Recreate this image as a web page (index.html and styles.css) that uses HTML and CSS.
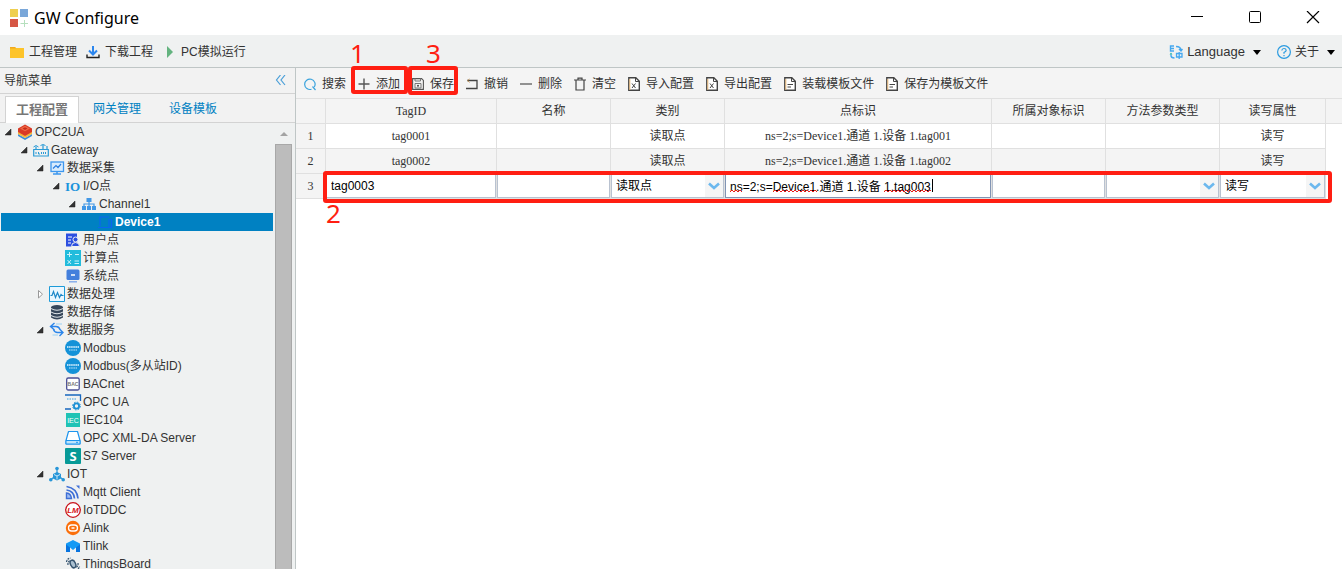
FILE: index.html
```html
<!DOCTYPE html>
<html lang="zh-CN">
<head>
    <meta charset="UTF-8">
    <meta name="viewport" content="width=device-width, initial-scale=1.0">
    <title>GW Configure</title>
    <link rel="stylesheet" href="styles.css">
</head>
<body>

    <!-- shared icons -->
    <svg class="defs" aria-hidden="true">
        <symbol id="chevron" viewBox="0 0 12 8"><path d="M1 1.500 6 6l5-4.500" fill="none" stroke="#6cb8ee" stroke-width="2.600"/></symbol>
        <symbol id="open" viewBox="0 0 16 16"><path d="M10 5v6H4z" fill="#333" stroke="#222" stroke-width=".5"/></symbol>
        <symbol id="closed" viewBox="0 0 16 16"><path d="M5.500 4.500v7.500L9.500 8.200z" fill="#fff" stroke="#999"/></symbol>
        <symbol id="xls" viewBox="0 0 12 14"><path d="M.8.8h7l3.500 3.500v9H.8z" fill="#fff" stroke="#444" stroke-width="1.400"/><path d="M7.500 1v3.500H11" fill="none" stroke="#444"/><path d="M1.800 2v11" stroke="#e8b878"/><path d="m4 6.500 3.500 4.500m0-4.500-3.500 4.500" stroke="#444"/></symbol>
        <symbol id="doc" viewBox="0 0 12 14"><path d="M.8.8h7l3.500 3.500v9H.8z" fill="#fff" stroke="#444" stroke-width="1.400"/><path d="M7.500 1v3.500H11" fill="none" stroke="#444"/><path d="M1.800 2v11" stroke="#e8b878"/><path d="M3.500 7.500h5.500M3.500 10h3.500" stroke="#444"/></symbol>
        <symbol id="modbus" viewBox="0 0 16 16"><circle cx="8" cy="8" r="8" fill="#1492d8"/><path d="M2 7h12" stroke="#b5dff6" stroke-width="1.800" stroke-dasharray="1.500 .6"/><path d="M4 10h8" stroke="#8dccf0" stroke-width="1.400" stroke-dasharray="1.500 .7"/></symbol>
    </svg>

    <header class="titlebar">
        <svg class="logo" width="20" height="20" viewBox="0 0 20 20"><path d="M0 0h8v8H0z" fill="#efcf4f"/><path d="M10 0h8v8h-8z" fill="#7aa7d9"/><path d="M0 10h8v8H0z" fill="#d65745"/><path d="M14.500 11v7m-4-3.500h7.500" stroke="#b5dfbd"/></svg>
        <h1>GW Configure</h1>
        <div class="win-btns">
            <button aria-label="最小化"><svg width="14" height="14" viewBox="0 0 14 14"><path d="M1 5.500h12" stroke="#000"/></svg></button>
            <button aria-label="最大化"><svg width="14" height="14" viewBox="0 0 14 14"><rect x="1.500" y=".5" width="11" height="11" rx="1" fill="none" stroke="#000"/></svg></button>
            <button aria-label="关闭"><svg width="14" height="14" viewBox="0 0 14 14"><path d="m1 0 12 12M13 0 1 12" stroke="#000" stroke-width="1.200"/></svg></button>
        </div>
    </header>

    <nav class="menubar">
        <button><svg width="16" height="16" viewBox="0 0 16 16"><path d="M1 3h5l1 1h8v10H1z" fill="#fdc42a"/><path d="M1 3h5l1 1.500H1z" fill="#f2a91d"/></svg>工程管理</button>
        <button><svg width="16" height="16" viewBox="0 0 16 16"><path d="M8 2v8M4 6.500l4 4 4-4" fill="none" stroke="#2b86ee" stroke-width="2"/><path d="M2 10.500v3h12v-3" fill="none" stroke="#222" stroke-width="1.400"/></svg>下载工程</button>
        <button><svg width="16" height="16" viewBox="0 0 16 16"><path d="M6 2v12l6-6z" fill="#63b37f"/></svg>PC模拟运行</button>
        <button class="lang"><svg width="14" height="16" viewBox="0 0 14 16"><path d="M5 2H1.500v5H5M1.500 4.500H5M7 2.500q5 0 5 4M10 5l2 2 1.500-2M2 9v2.500q0 2.500 3.500 2.500" fill="none" stroke="#45a8ef" stroke-width="1.400"/><path d="M7.500 9.500h5.500v3.500H7.500zM10.200 8v7" fill="none" stroke="#45a8ef" stroke-width="1.300"/><path d="M.5 10.500 2 8.500l1.500 2z" fill="#52cba8"/></svg>Language<i class="caret"></i></button>
        <button><svg width="14" height="16" viewBox="0 0 14 16"><circle cx="7" cy="8" r="6.400" fill="none" stroke="#2b9be0" stroke-width="1.200"/><path d="M4.800 6.500Q5 4.500 7 4.500t2.200 1.800Q9.200 7.500 7 8.500v1.300M7 11v1.300" fill="none" stroke="#2b9be0" stroke-width="1.200"/></svg>关于<i class="caret"></i></button>
    </nav>

    <div class="layout">
        <aside class="sidebar">
            <div class="side-title">
                <h2>导航菜单</h2>
                <button aria-label="折叠"><svg width="12" height="12" viewBox="0 0 12 12"><path d="M5.500 0 1.500 5l4 5M10 0 6 5l4 5" fill="none" stroke="#4a9fd8" stroke-width="1.200"/></svg></button>
            </div>
            <div class="tabs">
                <button class="tab active">工程配置</button>
                <button class="tab">网关管理</button>
                <button class="tab">设备模板</button>
            </div>
            <div class="tree-wrap">
                <ul class="tree">
                    <li><a href="#" class="lv0"><svg><use href="#open"/></svg><svg viewBox="0 0 16 16"><path d="m1 10 7 4 7-4v2l-7 4-7-4z" fill="#3d8fd8"/><path d="m1 7.500 7 4 7-4V10l-7 4-7-4z" fill="#f4b63a"/><path d="m1 4.500 7-4 7 4V8l-7 4-7-4z" fill="#d93a26"/><path d="m3 4.500 5-2.800 5 2.800-5 2.800z" fill="#ee6a45"/><path d="m5.500 4.500 2.500-1.300 2.500 1.300L8 6z" fill="#c92b1c"/></svg>OPC2UA</a></li>
                    <li><a href="#" class="lv1"><svg><use href="#open"/></svg><svg viewBox="0 0 16 16"><path d="M.7 7.500h14.600v6.500H.7zM3 7.500V4.500m7 3V3M14 7.500V4" fill="none" stroke="#2a9bd6" stroke-width="1.200"/><path d="M.5 5q2.500-3 5 0M7.500 3.500q2.500-2 5 0M3 10v2M5.500 10v2h1.500M8.500 10v2M10.500 10v2M12.500 10v2" fill="none" stroke="#2a9bd6"/></svg>Gateway</a></li>
                    <li><a href="#" class="lv2"><svg><use href="#open"/></svg><svg viewBox="0 0 16 16"><rect x="2" y="2" width="12.500" height="9.500" fill="#d8ecfd" stroke="#3d97ee" stroke-width="1.300"/><path d="m4 8.500 3-3 2 2 3-3.500" fill="none" stroke="#2b7fe0" stroke-width="1.200"/><path d="M8 12v1.500M4 14h8" stroke="#3d97ee" stroke-width="1.500"/></svg>数据采集</a></li>
                    <li><a href="#" class="lv3"><svg><use href="#open"/></svg><svg viewBox="0 0 16 16"><text class="glyph-io" x="0" y="13">IO</text></svg>I/O点</a></li>
                    <li><a href="#" class="lv4"><svg><use href="#open"/></svg><svg viewBox="0 0 16 16"><path d="M5.500 2h5v4h-5zM1 10h4v4H1zM6 10h4v4H6zM11 10h4v4h-4z" fill="#4298e6"/><path d="M8 6v4M3 10V8h10v2" fill="none" stroke="#4298e6" stroke-width="1.200"/></svg>Channel1</a></li>
                    <li><a href="#" class="lv5 selected"><svg></svg><svg viewBox="0 0 16 16"><path d="M3 12V3h9M1 13.500h11M12 5.500h2.500v8H12z" fill="none" stroke="#0a66f0" stroke-width="1.200"/></svg>Device1</a></li>
                    <li><a href="#" class="lv3"><svg></svg><svg viewBox="0 0 16 16"><path d="M1 1.500h11v13H1z" fill="#2c4fe0"/><path d="M3 5h4M3 8h3M3 11h3" stroke="#fff"/><circle cx="10.500" cy="7.500" r="2.500" fill="#2c4fe0" stroke="#eff1f1"/><path d="M6.500 14.500q0-4 4-4t4 4z" fill="#2c4fe0" stroke="#eff1f1"/></svg>用户点</a></li>
                    <li><a href="#" class="lv3"><svg></svg><svg viewBox="0 0 16 16"><path d="M0 0h16v16H0z" fill="#22bcdc"/><path d="M4.500 2v5M2 4.500h5M10 4.500h4M2.500 10l3.500 4m0-4-3.500 4M9.500 11h4.500M9.500 13.500h4.500" stroke="#c8f3fa"/></svg>计算点</a></li>
                    <li><a href="#" class="lv3"><svg></svg><svg viewBox="0 0 16 16"><rect x="1.500" y="1.500" width="13" height="10.500" rx="1.500" fill="#437fdc"/><path d="M6 7h4" stroke="#fff" stroke-width="1.500"/><path d="M4 13.800h8" stroke="#7fa9ea" stroke-width="1.400"/></svg>系统点</a></li>
                    <li><a href="#" class="lv2"><svg><use href="#closed"/></svg><svg viewBox="0 0 16 16"><path d="M.5.5h15v15H.5z" fill="#eaf7ff" stroke="#1c9bd8"/><path d="M1.500 9.500H3l1.500-4 2 6 2-5 2 5 1.500-3 1 1h1.500" fill="none" stroke="#1c87c8" stroke-width="1.200"/></svg>数据处理</a></li>
                    <li><a href="#" class="lv2"><svg></svg><svg viewBox="0 0 16 16"><path d="M2 3v10.500q6 4 12 0V3z" fill="#36475a"/><ellipse cx="8" cy="3.200" rx="6" ry="2.200" fill="#36475a"/><path d="M2 4.500q6 3.500 12 0M2 8q6 3.500 12 0M2 11.500q6 3.500 12 0" fill="none" stroke="#dfe5e9"/></svg>数据存储</a></li>
                    <li><a href="#" class="lv2"><svg><use href="#open"/></svg><svg viewBox="0 0 16 16"><path d="M5.500 1 1.500 4.500l4 3.500M2 4.500h5q3 0 4 3M10.500 7l3.500 3.500-3.500 3.500M14 10.500H8.500q-3 0-4-3" fill="none" stroke="#2b85ea" stroke-width="1.400"/><path d="M7 2h6M3.500 13H9" stroke="#9bd2f4"/></svg>数据服务</a></li>
                    <li><a href="#" class="lv3"><svg></svg><svg><use href="#modbus"/></svg>Modbus</a></li>
                    <li><a href="#" class="lv3"><svg></svg><svg><use href="#modbus"/></svg>Modbus(多从站ID)</a></li>
                    <li><a href="#" class="lv3"><svg></svg><svg viewBox="0 0 16 16"><rect x="1.700" y="2" width="12.500" height="12" rx="1.500" fill="#fff" stroke="#4a4f96" stroke-width="1.300"/><text class="glyph-bac" x="8" y="10">BAC</text></svg>BACnet</a></li>
                    <li><a href="#" class="lv3"><svg></svg><svg viewBox="0 0 16 16"><path d="M0 1h15.500v6M0 15h6" fill="none" stroke="#1767be" stroke-width="1.300"/><path d="M2 5h9" stroke="#3ba0de" stroke-dasharray="1.500 1"/><circle cx="11.500" cy="12" r="2.600" fill="none" stroke="#1b8fd4" stroke-width="1.800"/><circle cx="11.500" cy="12" r="3.900" fill="none" stroke="#1b8fd4" stroke-dasharray="1.600 1.450"/></svg>OPC UA</a></li>
                    <li><a href="#" class="lv3"><svg></svg><svg viewBox="0 0 16 16"><path d="M1 1h14v14H1z" fill="#1fc3b5"/><text class="glyph-iec" x="8" y="11">IEC</text></svg>IEC104</a></li>
                    <li><a href="#" class="lv3"><svg></svg><svg viewBox="0 0 16 16"><path d="m3.500 1.500-2.500 9v3.500h14v-3.500l-2.500-9z" fill="#fff" stroke="#1d95ee" stroke-width="1.200" stroke-linejoin="round"/><path d="M1 10.500h14v3.500H1z" fill="#bfe4fc" stroke="#1d95ee"/><path d="M11 12.300h2" stroke="#1d95ee"/></svg>OPC XML-DA Server</a></li>
                    <li><a href="#" class="lv3"><svg></svg><svg viewBox="0 0 16 16"><rect width="16" height="16" rx="1" fill="#079a97"/><text class="glyph-s" x="8" y="13">S</text></svg>S7 Server</a></li>
                    <li><a href="#" class="lv2"><svg><use href="#open"/></svg><svg viewBox="0 0 16 16"><path d="M8 3v4M4.500 11.500 2 13.500m9.500-2 2.500 2" stroke="#2796d8" stroke-width="1.200"/><circle cx="8" cy="2.500" r="1.800" fill="#2796d8"/><circle cx="1.800" cy="13.800" r="1.800" fill="#2796d8"/><circle cx="14.200" cy="13.800" r="1.800" fill="#2796d8"/><path d="m8 6 4 2v4.500l-4 2-4-2V8z" fill="#2796d8"/><path d="m5 8.500 3 1.500 3-1.500M8 10v3.500" fill="none" stroke="#cbe8f8"/></svg>IOT</a></li>
                    <li><a href="#" class="lv3"><svg></svg><svg viewBox="0 0 16 16"><path d="M1.500 2.500Q12 4 13 14.500M1.500 6Q9 7 9.500 14.500" fill="none" stroke="#3e6fd6" stroke-width="1.700"/><path d="M1.500 9q4.500.5 5 5.500H1.500z" fill="#9fbcf2" stroke="#3e6fd6" stroke-width="1.400"/><path d="M11 1.500h3.500V5z" fill="#3e6fd6"/></svg>Mqtt Client</a></li>
                    <li><a href="#" class="lv3"><svg></svg><svg viewBox="0 0 16 16"><circle cx="8" cy="8" r="7.300" fill="#fff" stroke="#c9141b" stroke-width="1.300"/><text class="glyph-lm" x="8" y="11">LM</text></svg>IoTDDC</a></li>
                    <li><a href="#" class="lv3"><svg></svg><svg viewBox="0 0 16 16"><circle cx="8" cy="8" r="7.200" fill="#fb6f0a"/><rect x="3.500" y="5" width="9" height="6" rx="3" fill="none" stroke="#fff" stroke-width="1.300"/><path d="M6.500 8h3" stroke="#fff" stroke-width="1.500"/></svg>Alink</a></li>
                    <li><a href="#" class="lv3"><svg></svg><svg viewBox="0 0 16 16"><path d="m1 5.500 7-3.500 7 3.500V14h-4V9.500L8 12 5 9.500V14H1z" fill="#149af5"/><path d="M1 6.500 5 9.500V14H1zM15 6.500l-4 3V14h4z" fill="#0874df"/></svg>Tlink</a></li>
                    <li><a href="#" class="lv3"><svg></svg><svg viewBox="0 0 16 16"><ellipse cx="8" cy="8" rx="2.500" ry="4" fill="#a9bfd0" stroke="#34536f" stroke-width="1.500" transform="rotate(-25 8 8)"/><path d="M1.500 6q.5-3.500 4-4M3 9q-.500-3 2-4.500M10.500 14q3.500-.5 4-4M13 7q.5 3-2 4.500" fill="none" stroke="#34536f" stroke-width="1.200" stroke-dasharray="2 .8"/></svg>ThingsBoard</a></li>
                </ul>
                <div class="scrollbar"><i class="up"></i><div class="thumb"></div></div>
            </div>
        </aside>

        <main class="main">
            <div class="toolbar">
                <button><svg viewBox="0 0 12 14"><path d="M7.500 12.200A5.200 5.200 0 1 1 10.300 10M8.500 9.500l3 3.500" fill="none" stroke="#3ba3dd" stroke-width="1.200"/></svg>搜索</button>
                <button><svg viewBox="0 0 12 14"><path d="M6 1.500v11M.5 7h11" stroke="#555" stroke-width="1.400"/></svg>添加<span class="mark mark-add"><b>1</b></span></button>
                <button><svg viewBox="0 0 12 14"><path d="M.6 1.600h9l1.800 1.800v9H.6z" fill="none" stroke="#555" stroke-width="1.100"/><path d="M3 1.500v2.500h5.500V1.500M3 6.500h6v4.500H3z" fill="none" stroke="#777"/><circle cx="6" cy="8.700" r="1" fill="#444"/></svg>保存<span class="mark mark-save"><b>3</b></span></button>
                <button><svg viewBox="0 0 12 14"><path d="M1 3.500h10v8H0" fill="none" stroke="#444" stroke-width="1.300"/><path d="M3.500 2 1.500 3.500l2 2" fill="none" stroke="#c59b62"/></svg>撤销</button>
                <button><svg viewBox="0 0 12 14"><path d="M0 7h12" stroke="#666" stroke-width="1.400"/></svg>删除</button>
                <button><svg viewBox="0 0 12 14"><path d="M0 3h12M4 3V1.200h4V3M2 3v10h8V3" fill="none" stroke="#444" stroke-width="1.200"/></svg>清空</button>
                <button><svg><use href="#xls"/></svg>导入配置</button>
                <button><svg><use href="#xls"/></svg>导出配置</button>
                <button><svg><use href="#doc"/></svg>装载模板文件</button>
                <button><svg><use href="#doc"/></svg>保存为模板文件</button>
            </div>

            <table class="grid">
                <colgroup>
                    <col class="c-no"><col class="c-tag"><col class="c-mid"><col class="c-mid"><col class="c-node"><col class="c-mid"><col class="c-mid"><col class="c-rw"><col>
                </colgroup>
                <thead>
                    <tr><th></th><th>TagID</th><th>名称</th><th>类别</th><th>点标识</th><th>所属对象标识</th><th>方法参数类型</th><th>读写属性</th><th class="rest"></th></tr>
                </thead>
                <tbody>
                    <tr><td>1</td><td>tag0001</td><td></td><td>读取点</td><td>ns=2;s=Device1.通道 1.设备 1.tag001</td><td></td><td></td><td>读写</td><td class="rest"></td></tr>
                    <tr class="alt"><td>2</td><td>tag0002</td><td></td><td>读取点</td><td>ns=2;s=Device1.通道 1.设备 1.tag002</td><td></td><td></td><td>读写</td><td class="rest"></td></tr>
                    <tr class="editing">
                        <td>3<span class="mark mark-row"><b>2</b></span></td>
                        <td><input type="text" aria-label="TagID" value="tag0003"></td>
                        <td><input type="text" aria-label="名称"></td>
                        <td><div class="field"><select aria-label="类别"><option>读取点</option></select><svg class="drop"><use href="#chevron"/></svg></div></td>
                        <td><div class="field"><input type="text" class="focus" aria-label="点标识" spellcheck="false" value="ns=2;s=Device1.通道 1.设备 1.tag003">
                            <!-- spelling marks and text caret -->
                            <svg class="spell" viewBox="0 0 210 16"><path d="M0 14l2-2 2 2 2-2 2 2 2-2 2 2M43 14l2-2 2 2 2-2 2 2 2-2 2 2 2-2 2 2 2-2 2 2 2-2 2 2 2-2 2 2 2-2 2 2 2-2 2 2 2-2 2 2 2-2 2 2M154 14l2-2 2 2 2-2 2 2 2-2 2 2 2-2 2 2 2-2 2 2 2-2 2 2 2-2 2 2 2-2 2 2 2-2 2 2 2-2 2 2 2-2 2 2 2-2 1 1" fill="none" stroke="#e81c1c"/><path d="M202.500 1v13" stroke="#000"/></svg></div></td>
                        <td><input type="text" aria-label="所属对象标识"></td>
                        <td><div class="field"><select aria-label="方法参数类型"><option></option></select><svg class="drop"><use href="#chevron"/></svg></div></td>
                        <td><div class="field"><select aria-label="读写属性"><option>读写</option></select><svg class="drop"><use href="#chevron"/></svg></div></td>
                        <td class="rest"></td>
                    </tr>
                </tbody>
            </table>
        </main>
    </div>

</body>
</html>
```
FILE: styles.css
```css
* {
    margin: 0;
    padding: 0;
    box-sizing: border-box;
}

body {
    display: flex;
    flex-direction: column;
    height: 100vh;
    overflow: hidden;
    background: #fff;
    color: #333;
    font: 12px/18px "Liberation Sans", "Noto Sans CJK SC", sans-serif;
}

button, input, select {
    font: inherit;
    color: inherit;
    border: none;
    background: none;
}

svg { flex: none; }
a { color: inherit; text-decoration: none; }
ul { list-style: none; }
.defs { position: absolute; width: 0; height: 0; }

/* title bar */
.titlebar {
    display: flex;
    align-items: center;
    flex: none;
    height: 35px;
    padding-left: 10px;
}

.titlebar .logo { margin-top: 2px; }

.titlebar h1 {
    margin-left: 4px;
    color: #000;
    font: 16px/20px "Noto Sans", sans-serif;
}

.win-btns { display: flex; margin-left: auto; }

.win-btns button {
    display: flex;
    align-items: center;
    justify-content: center;
    width: 58px;
    height: 32px;
}

/* menu bar */
.menubar {
    display: flex;
    flex: none;
    height: 33px;
    padding: 2px 3px 0 5px;
    background: #eff1f1;
    border-bottom: 1px solid #bfc6c6;
}

.menubar button {
    display: flex;
    align-items: center;
    gap: 4px;
    padding: 0 4px;
}

.menubar .lang {
    margin-left: auto;
    margin-right: 8px;
    font-size: 13px;
}

.caret {
    margin-left: 4px;
    border: 4px solid transparent;
    border-top: 5px solid #000;
    border-bottom: 0;
}

.layout { display: flex; flex: 1; min-height: 0; }

/* sidebar */
.sidebar {
    display: flex;
    flex-direction: column;
    flex: none;
    width: 296px;
    background: #eff1f1;
    border-right: 1px solid #bfc6c6;
}

.side-title {
    display: flex;
    align-items: center;
    justify-content: space-between;
    height: 26px;
    padding: 0 8px 0 4px;
    background: #f2f2f2;
    border-bottom: 1px solid #d3d3d3;
}

.side-title h2 { font-size: 12px; font-weight: normal; }
.side-title button { display: flex; }

.tabs {
    display: flex;
    align-items: flex-end;
    height: 29px;
    padding-left: 5px;
    background: #f2f2f2;
    border-bottom: 1px solid #d3d3d3;
}

.tab {
    height: 26px;
    padding: 0 14px;
    color: #0081c2;
}

.tab.active {
    height: 27px;
    margin-bottom: -1px;
    padding: 0 10px;
    border: 1px solid #d3d3d3;
    border-bottom: 0;
    background: #fff;
    color: #777;
    font-size: 13px;
    font-weight: bold;
}

.tree-wrap { display: flex; flex: 1; min-height: 0; }
.tree { flex: 1; margin: 0 2px 0 1px; overflow: hidden; }

.tree a {
    display: flex;
    align-items: center;
    height: 18px;
    white-space: nowrap;
}

.tree svg { width: 16px; height: 16px; overflow: visible; }
.tree svg + svg { margin-right: 2px; }
.tree .selected { background: #0081c2; color: #fff; font-weight: bold; }
.lv1 { padding-left: 16px; }
.lv2 { padding-left: 32px; }
.lv3 { padding-left: 48px; }
.lv4 { padding-left: 64px; }
.lv5 { padding-left: 80px; }

/* lettering inside tree icons */
.glyph-io { fill: #1b93dc; font: bold 13px "Liberation Serif", serif; }
.glyph-bac { fill: #777; font: bold 5px "Liberation Sans", sans-serif; text-anchor: middle; }
.glyph-iec { fill: #fff; font: 7px "Liberation Sans", sans-serif; text-anchor: middle; }
.glyph-s { fill: #fff; font: bold 13px "Open Sans", sans-serif; text-anchor: middle; }
.glyph-lm { fill: #d5131a; font: italic bold 8px "Liberation Sans", sans-serif; text-anchor: middle; }

.scrollbar {
    display: flex;
    flex-direction: column;
    width: 17px;
    margin-right: 3px;
}

.scrollbar .up {
    margin: 9px 5px 8px;
    border: 4px solid transparent;
    border-top: 0;
    border-bottom: 4px solid #a3a3a3;
}

.scrollbar .thumb {
    flex: 1;
    background: #bcbcbc;
    border: 1px solid #a8a8a8;
    border-bottom: 0;
}

/* main area */
.main { flex: 1; min-width: 0; }

.toolbar {
    display: flex;
    height: 31px;
    padding-left: 2px;
    background: #f4f4f4;
    border-bottom: 1px solid #e0e0e0;
}

.toolbar button {
    display: flex;
    align-items: center;
    gap: 6px;
    position: relative;
    padding: 1px 6px 0;
    white-space: nowrap;
}

.toolbar svg { width: 12px; height: 14px; }

.grid {
    width: 100%;
    table-layout: fixed;
    border-collapse: separate;
    border-spacing: 0;
    font-family: "Liberation Serif", "Noto Sans CJK SC", serif;
}

.c-no { width: 30px; }
.c-tag { width: 171px; }
.c-mid { width: 114px; }
.c-node { width: 267px; }
.c-rw { width: 106px; }

.grid th, .grid td {
    height: 25px;
    border-right: 1px solid #e0e0e0;
    border-bottom: 1px solid #e0e0e0;
    font-weight: normal;
    text-align: center;
    white-space: nowrap;
}

.grid th, .grid td:first-child, .grid .alt td { background: #f4f4f4; }
.grid th.rest { border-right: 0; }
.grid td.rest, .grid .alt td.rest { border: 0; background: #fff; }

/* row being edited */
.editing { position: relative; }
.field { position: relative; }

.editing input, .editing select {
    display: block;
    width: 100%;
    height: 24px;
    padding: 0 4px;
    border: 1px solid #b9c2d0;
    appearance: none;
    background: #fff;
    color: #000;
    font-family: "Liberation Sans", "Noto Sans CJK SC", sans-serif;
}

.editing .focus {
    padding-bottom: 2px;
    border-color: #8194b4;
}

.drop {
    position: absolute;
    top: 1px;
    right: 1px;
    width: 18px;
    height: 22px;
    padding: 7px 3px;
    background: #f5f5f5;
    pointer-events: none;
}

.spell {
    position: absolute;
    top: 4px;
    left: 5px;
    width: 210px;
    height: 16px;
    pointer-events: none;
}

/* red step marks */
.mark {
    position: absolute;
    z-index: 5;
    border: 4px solid #ff1e12;
    border-radius: 3px;
    pointer-events: none;
}

.mark b {
    position: absolute;
    color: #ff1e12;
    font: 26px/26px "Noto Sans", sans-serif;
}

.mark-add { inset: -2px -2px 4px -1px; }
.mark-save { inset: -2px 2px 3px 2px; }
.mark-row { inset: -3px 10px -4px 27px; }
.mark-add b { top: -30px; left: -5px; }
.mark-save b { top: -30px; left: 14px; }
.mark-row b { top: 25px; left: -1px; }
```
